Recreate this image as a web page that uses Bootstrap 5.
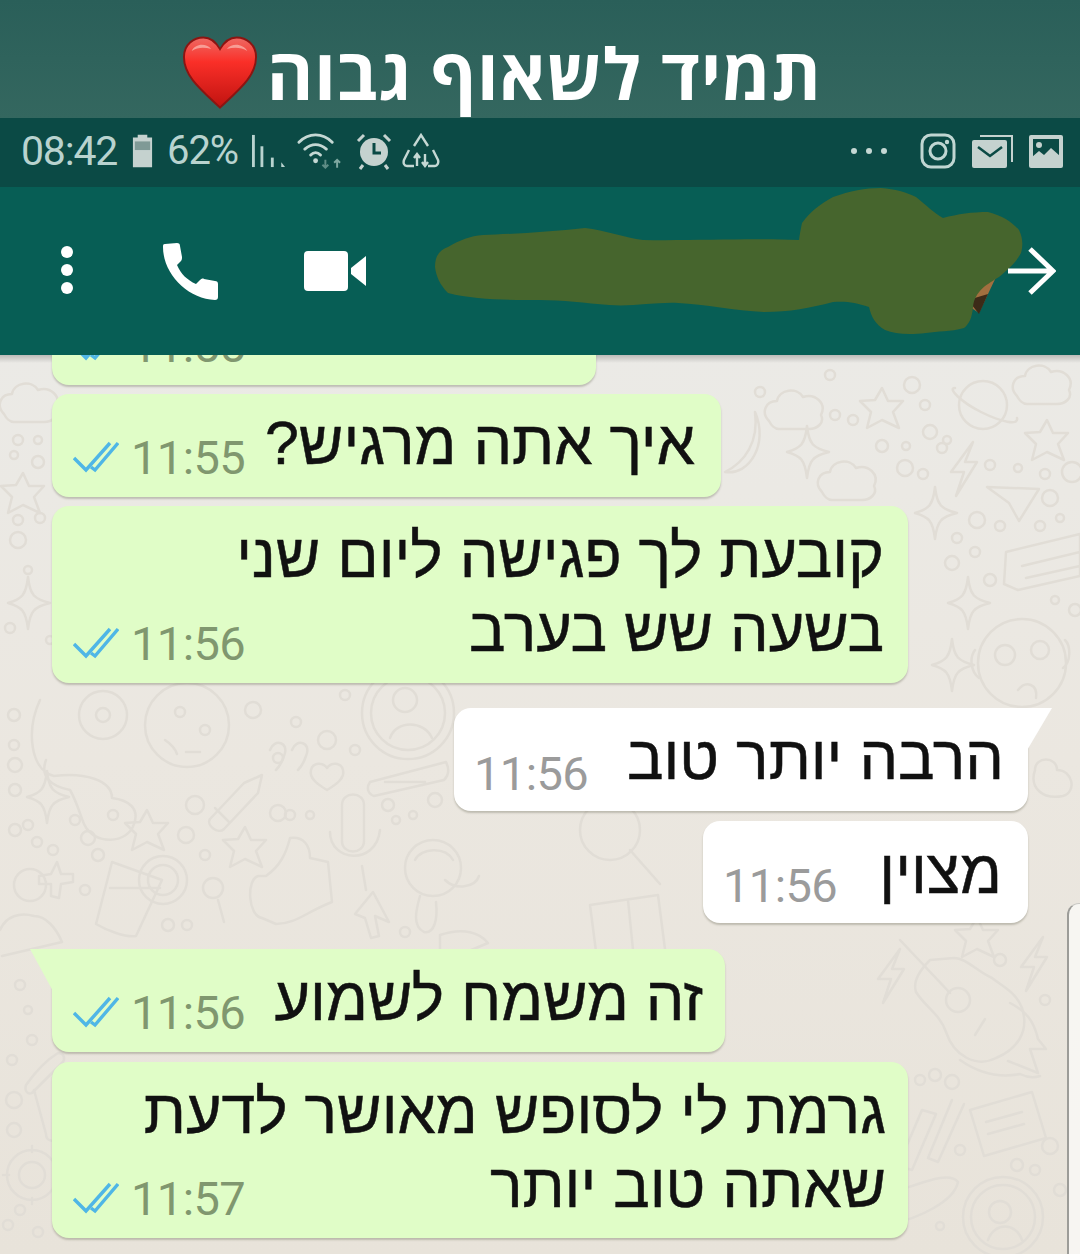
<!DOCTYPE html>
<html lang="he">
<head>
  <meta charset="UTF-8" />
  <meta name="viewport" content="width=device-width, initial-scale=1" />
  <title>תמיד לשאוף גבוה</title>
  <link href="https://cdn.jsdelivr.net/npm/bootstrap@5.3.0/dist/css/bootstrap.min.css" rel="stylesheet" />
  <style>
    html, body { height: 1254px; overflow: hidden; }
    body { background: #e9e5dd; font-family: "Liberation Sans", sans-serif; }
    .title-band {
      height: 118px;
      background: linear-gradient(#2a5f59, #34675f);
      color: #fff;
      font-family: "Open Sans", "Liberation Sans", sans-serif;
      font-weight: 700;
      font-size: 71px;
      letter-spacing: .7px;
      line-height: 1;
      padding-right: 258px;
      padding-top: 35px;
    }
    .title-text { margin-top: 2px; }
    .heart-icon { flex: none; margin-right: 9px; }
    .status-strip {
      height: 69px;
      background: #0b4a45;
      color: #b9d3cf;
      font-family: Roboto, sans-serif;
      padding: 0 17px 3px 21px;
    }
    .status-time { font-size: 41px; letter-spacing: -1.2px; line-height: 1; }
    .status-pct { font-size: 40px; letter-spacing: -1.2px; line-height: 1; margin-left: 13px; }
    .chat-head { height: 168px; background: #075e55; position: relative; padding-left: 54px; }
    .blot { position: absolute; left: 0; top: 0; }
    .back-arrow { position: absolute; left: 1006px; top: 59px; }
    .chat-area {
      height: 899px;
      position: relative;
      overflow: hidden;
      background: linear-gradient(#ebeae6, #ebe7e0 45%, #e8e3da);
    }
    .head-shadow { position: absolute; inset: 0 0 auto 0; height: 8px; background: linear-gradient(rgba(0,0,0,.2), rgba(0,0,0,0)); }
    .doodles { position: absolute; inset: 0; }
    .bubble {
      position: absolute;
      border-radius: 17px;
      box-shadow: 0 2px 2px rgba(90,90,70,.3);
      direction: rtl;
      color: #111;
      font-size: 61px;
      line-height: 74px;
      -webkit-text-stroke: .5px #111;
    }
    .bubble-out { background: #e0fdc7; left: 52px; }
    .bubble-in { background: #fff; right: 52px; }
    .msg-text { position: absolute; white-space: nowrap; }
    .msg-time {
      position: absolute;
      font-family: Roboto, sans-serif;
      font-size: 47px;
      line-height: 1;
      letter-spacing: -.6px;
      direction: ltr;
      -webkit-text-stroke: 0;
    }
    .bubble-out .msg-time { color: #80976f; left: 79px; bottom: 16px; }
    .bubble-in .msg-time { color: #9b9b9b; left: 20px; bottom: 14px; }
    .ticks { position: absolute; left: 21px; bottom: 24px; }
    .tail { position: absolute; top: 0; }
    .side-panel {
      position: absolute;
      left: 1067px;
      top: 548px;
      width: 30px;
      height: 400px;
      background: rgba(250,249,246,.82);
      border-left: 2px solid #9c9c98;
      border-top: 1px solid #c9c9c4;
      border-top-left-radius: 12px;
    }
  </style>
</head>
<body>

  <div class="title-band d-flex" dir="rtl">
    <span class="title-text">תמיד לשאוף גבוה</span>
    <svg class="heart-icon" width="76" height="75" viewBox="0 0 78 76">
      <defs>
        <linearGradient id="heartFill" x1="0" y1="0" x2="0" y2="1"><stop offset="0" stop-color="#ee6a64"/><stop offset=".35" stop-color="#fa2f28"/><stop offset="1" stop-color="#c01310"/></linearGradient>
      </defs>
      <path d="M39 74C20 56 2 42 2 22 2 9 12 2 22 2c8 0 13 5 17 12 4-7 9-12 17-12 10 0 20 7 20 20 0 20-18 34-37 52z" fill="url(#heartFill)" stroke="#8c1512" stroke-width="2"/>
      <path d="M10 16c3-7 14-9 20-2-7-2-14-2-20 2zM46 14c6-7 17-5 21 2-6-4-14-4-21-2z" fill="#f9b5ae" opacity=".75"/>
    </svg>
  </div>

  <div class="status-strip d-flex align-items-center justify-content-between">
    <div class="d-flex align-items-center">
      <span class="status-time">08:42</span>
      <svg width="23" height="36" viewBox="0 0 24 36" style="margin-left:14px"><path d="M7 1h10v3h5v31H2V4h5z" fill="#c5d2cf"/><rect x="4" y="8" width="16" height="9" fill="#7f9a96"/></svg>
      <span class="status-pct">62%</span>
      <svg width="34" height="36" viewBox="0 0 36 36" style="margin-left:14px"><g fill="#b9d3cf"><rect x="0" y="1" width="3" height="34"/><rect x="9" y="13" width="3" height="22"/><rect x="20" y="25" width="3" height="10"/><path d="M31 30l4 5h-4z"/></g></svg>
      <svg width="47" height="36" viewBox="0 0 48 36" style="margin-left:10px"><g fill="none" stroke="#c5d8d4" stroke-width="3" stroke-linecap="round"><path d="M3 9C13-1 27-1 37 9"/><path d="M9 16c7-6 15-6 22 0"/><path d="M15 22c3-3 7-3 10 0"/></g><circle cx="20" cy="28" r="2.5" fill="#c5d8d4"/><path d="M30 27v8M27 32l3 3 3-3" stroke="#5f8d86" stroke-width="2" fill="none"/><path d="M42 35v-8M39 30l3-3 3 3" stroke="#7fa8a1" stroke-width="2" fill="none"/></svg>
      <svg width="36" height="38" viewBox="0 0 36 38" style="margin-left:13px"><circle cx="18" cy="20" r="14" fill="#c5d2cf"/><path d="M18 11v10h7" stroke="#0b4a45" stroke-width="3" fill="none"/><path d="M2 9l6-6M34 9l-6-6M7 33l-3 4M29 33l3 4" stroke="#c5d2cf" stroke-width="3"/></svg>
      <svg width="38" height="36" viewBox="0 0 38 36" style="margin-left:10px"><g fill="none" stroke="#c5d8d4" stroke-width="2.4"><path d="M12 13l7-11 7 11"/><path d="M31 17l5 10c1 3-1 6-3 6h-7"/><path d="M12 33H5c-3 0-4-3-3-6l5-10"/><path d="M15 33v-12M12 25l3-4 3 4M23 33V21M20 29l3 4 3-4"/></g></svg>
    </div>
    <div class="d-flex align-items-center">
      <svg width="38" height="8" viewBox="0 0 38 8" style="margin-right:32px"><g fill="#c5d8d4"><circle cx="4" cy="4" r="3"/><circle cx="19" cy="4" r="3"/><circle cx="34" cy="4" r="3"/></g></svg>
      <svg width="36" height="36" viewBox="0 0 36 36" class="me-3"><g fill="none" stroke="#c0d6d2" stroke-width="3"><rect x="2" y="2" width="32" height="32" rx="9"/><circle cx="18" cy="18" r="8"/></g><circle cx="27" cy="9" r="2.2" fill="#c0d6d2"/></svg>
      <svg width="41" height="33" viewBox="0 0 41 33" class="me-3"><path d="M8 1h32v26" fill="none" stroke="#c5d2cf" stroke-width="2"/><rect x="0" y="5" width="35" height="28" rx="2" fill="#c5d2cf"/><path d="M6 12l12 9 12-9" fill="none" stroke="#0b4a45" stroke-width="2.5"/></svg>
      <svg width="34" height="33" viewBox="0 0 34 33"><rect width="34" height="33" rx="2" fill="#c5d2cf"/><rect x="4" y="4" width="26" height="18" fill="#0b4a45"/><circle cx="10" cy="10" r="3" fill="#c5d2cf"/><path d="M3 22l7-6 5 4 7-7 9 8v12H3z" fill="#c5d2cf"/></svg>
    </div>
  </div>

  <div class="chat-head d-flex align-items-center">
    <svg width="26" height="52" viewBox="0 0 26 52"><g fill="#fff"><circle cx="13" cy="7" r="6"/><circle cx="13" cy="25" r="6"/><circle cx="13" cy="43" r="6"/></g></svg>
    <svg width="58" height="58" viewBox="0 0 58 58" style="margin-left:82px"><path d="M3 2l12-1c2 0 3 1 3 3l2 11c0 1 0 3-1 4l-4 4c4 9 10 15 19 19l4-4c1-1 3-2 4-1l11 2c2 0 3 1 3 3v13c0 2-1 3-3 3C26 57 1 32 1 5c0-2 0-3 2-3z" fill="#fff"/></svg>
    <svg width="62" height="40" viewBox="0 0 62 40" style="margin-left:84px"><rect width="44" height="40" rx="4" fill="#fff"/><path d="M47 17L62 5v30L47 23z" fill="#fff"/></svg>
    <!-- scribble over the contact name, page coordinates -->
    <svg class="blot" width="1080" height="168" viewBox="0 187 1080 168">
      <path d="M962 283l35-8-18 38-12-8z" fill="#a26f3f"/>
      <path d="M968 300l20-6-9 20z" fill="#3c2a18"/>
      <path d="M435 267C435 255 440 250 448 247 460 240 470 236 483 235 510 234 550 232 585 228 605 230 625 238 643 240 690 241 750 238 799 240 800 232 801 228 802 223 810 212 820 204 833 197 850 191 865 188 881 188 895 189 906 192 916 197 926 205 934 213 943 218 958 214 972 212 988 212 1003 216 1012 222 1019 230 1023 238 1023 246 1021 253 1015 264 1007 270 999 277 988 284 975 290 973 307 972 318 969 324 964 328 950 332 938 331 926 333 908 335 895 334 885 330 875 324 871 316 869 307 855 302 845 301 833 302 810 308 790 312 764 312 735 311 705 304 678 303 655 302 632 307 609 305 585 303 562 300 540 300 510 300 475 300 448 293 440 285 436 276 435 267z" fill="#46652d"/>
    </svg>
    <svg class="back-arrow" width="50" height="50" viewBox="0 0 50 50"><path d="M2 25h44M24 3l23 22-23 22" fill="none" stroke="#fff" stroke-width="5"/></svg>
  </div>

  <div class="chat-area">
    <!-- wallpaper doodles, page coordinates -->
    <svg class="doodles" id="wallpaper" width="1080" height="899" viewBox="0 355 1080 899">
      <defs>
        <path id="d-cloud" d="M-26 14c-8-8-4-20 8-20 2-12 20-14 26-4 12-4 24 6 18 18 4 8-4 14-12 14h-30c-4 0-8-4-10-8z"/>
        <path id="d-star" d="M0-20l6 13 15 0-10 11 6 16-17-8-15 8 4-16-11-11 15-1z"/>
        <path id="d-spark" d="M0-26C2-8 6-4 22 0 6 4 2 8 0 26-2 8-6 4-20 0-6-4-2-8 0-26z"/>
        <path id="d-bolt" d="M10-26L-12 4 1 4-7 28 14-6 2-6z"/>
      </defs>
      <g fill="none" stroke="#e1ddd6" stroke-width="2.5" stroke-linejoin="round" stroke-linecap="round">
        <use href="#d-cloud" x="795" y="407"/><use href="#d-cloud" x="848" y="478"/><use href="#d-cloud" x="1043" y="382"/><use href="#d-cloud" x="30" y="400"/>
        <use href="#d-star" x="882" y="408"/><use href="#d-star" x="1047" y="440"/><use href="#d-star" x="23" y="493"/><use href="#d-star" x="147" y="830"/><use href="#d-star" x="245" y="847"/><use href="#d-star" x="977" y="937"/>
        <use href="#d-spark" x="807" y="452"/><use href="#d-spark" x="935" y="513"/><use href="#d-spark" x="968" y="603"/><use href="#d-spark" x="952" y="665"/><use href="#d-spark" x="28" y="603"/><use href="#d-spark" x="47" y="797"/>
        <use href="#d-bolt" x="963" y="468"/><use href="#d-bolt" x="1033" y="963"/><use href="#d-bolt" x="890" y="975"/>

        <!-- planet, banana, plane, ticket -->
        <circle cx="983" cy="405" r="24"/><path d="M955 388c-8 0 6 14 26 24s38 14 36 6"/>
        <path d="M755 412c4 30-10 50-30 60 24 4 44-28 30-60z"/>
        <path d="M987 487l52 2-20 32-10-18z"/>
        <path d="M1006 552l74-18v42l-62 14-14-6zM1022 566l58-14M1026 578l54-12"/>

        <!-- monkey -->
        <circle cx="1022" cy="663" r="44"/><circle cx="1005" cy="655" r="10"/><circle cx="1040" cy="650" r="9"/><path d="M1018 690c8-10 20-6 18 8"/><path d="M975 650c-6 8-4 22 4 28M1065 640c6 6 6 22-2 28"/>

        <!-- hand with cookie, cookie, quote -->
        <path d="M40 700c-14 30-10 70 14 76 30-4 58 4 58 22 16 2 28 10 22 26-6 20-40 22-50 0-4-10-8-24-14-34-20-4-30-14-24-30"/>
        <circle cx="103" cy="715" r="24"/><circle cx="103" cy="715" r="7"/>
        <circle cx="187" cy="725" r="42"/><circle cx="180" cy="712" r="5"/><circle cx="205" cy="730" r="5"/><path d="M165 740c6 4 10 8 12 14M186 752h14"/>
        <path d="M270 750c4-12 20-8 14 6-2 6-4 10-8 14M292 750c4-12 20-8 14 6-2 6-4 10-8 14"/>
        <path d="M327 790c-10-6-18-12-16-20 2-8 12-8 16-2 4-6 14-6 16 2 2 8-6 14-16 20z"/>
        <path d="M262 775l-4 18-34 36c-6 6-18-4-14-10l34-36z"/><path d="M215 808l14 14"/>

        <!-- avatar medallions -->
        <circle cx="408" cy="713" r="46"/><circle cx="408" cy="713" r="37"/><circle cx="405" cy="700" r="12"/><path d="M390 738c6-18 34-18 42 0"/>
        <path d="M370 782l76-20c4 8 2 14-2 18l-70 16c-6-2-8-8-4-14zM385 782h40"/>
        <circle cx="1003" cy="1217" r="40"/><circle cx="1003" cy="1217" r="32"/><circle cx="1000" cy="1212" r="11"/><path d="M988 1240c6-18 28-18 34 0"/>

        <!-- mic, face, arrow, thumb -->
        <path d="M342 805c0-14 22-14 22 0v36c0 14-22 14-22 0zM330 832c0 30 46 34 50-2M362 866l4 24"/>
        <circle cx="433" cy="868" r="28"/><path d="M415 860c6-12 30-14 38 0M420 896c-4 14-8 30 4 36 10 2 14-12 12-30"/><path d="M445 880c10 10 30 8 34-4"/>
        <path d="M373 892l-18 22 10 4 6 20 8-2-4-20 14 6z"/>
        <path d="M290 838c-4 16-10 28-24 38l-8 0c-12 4-10 40 4 42l14 6c20 0 30-12 56-22l-4-40-18-4c0-12-6-22-20-20z"/>

        <!-- person, plus, drink with orange, lollipop -->
        <circle cx="30" cy="885" r="16"/><path d="M0 930c6-14 20-18 34-14 12 0 22 12 28 26l-60 14"/>
        <path d="M57 862l4 12 12 0 0 8-12 2-2 14-8-2 0-12-12 0 0-8 12-2z"/>
        <path d="M112 862l50 18-26 56c-10 2-30-6-40-12zM110 888h50"/>
        <circle cx="163" cy="880" r="24"/><circle cx="163" cy="880" r="15"/>
        <circle cx="213" cy="888" r="10"/><path d="M218 900l6 22"/>

        <!-- right side: guitar and flames -->
        <path d="M900 940l50 53"/>
        <path d="M930 960c-8 8-18 20-14 32 10 16 24 22 30 40 8 24 30 36 50 26 20-8 34-26 26-50-6-16-20-22-30-30-14-6-26-20-38-20z"/>
        <circle cx="958" cy="1000" r="12"/><path d="M975 1035l10-16"/>
        <path d="M1010 1003c16 8 24 18 28 36l8 10-16 0 8 24-30-12M960 1060c20 14 40 18 60 14 8 4 14 4 20 2"/>
        <path d="M970 1110l62-18 14 46-62 18zM986 1122l36-10M988 1134l36-10"/>
        <path d="M922 1110l-24 56 14 4 24-56zM952 1100l-24 58 10 4 26-58"/>
        <path d="M900 1190c30-10 50-18 58-8-4 20-40 36-66 42"/>

        <!-- middle strip -->
        <path d="M590 905l68-10 8 62-68 10zM628 900l6 60"/>
        <circle cx="610" cy="830" r="30"/><path d="M630 850l30 34"/>
        <path d="M440 935c24-8 40-2 48 8l-48 20z"/>
        <path d="M1035 770c0-14 22-14 22 0 16 0 20 22 6 26-20 4-34-8-28-26z"/>
        <path d="M900 715c20-6 44 2 52 18-20 20-50 12-52-18z"/>

        <!-- left side: gear, paperclip -->
        <circle cx="32" cy="1175" r="13"/><circle cx="32" cy="1175" r="25"/><path d="M32 1146v6M32 1198v6M3 1175h6M55 1175h6"/>
        <path d="M26 1085c10-14 22-26 32-32 6 0 8 6 4 10l-30 30c-4 2-8-2-6-8z"/>
        <path d="M34 1090l12 44c0 8 8 8 14 4"/>
      </g>
      <g id="dots" fill="none" stroke="#e1ddd6" stroke-width="2.5"></g>
    </svg>
    <div class="head-shadow"></div>

    <div class="bubble bubble-out" style="top:-30px;width:544px;height:60px">
      <span class="msg-time">11:55</span>
      <svg class="ticks" width="46" height="32" viewBox="0 0 46 32"><g fill="none" stroke="#4fb6e6" stroke-width="3.4"><path d="M1 17l12 12L37 2"/><path d="M18 26l4 3L45 2"/></g></svg>
    </div>

    <div class="bubble bubble-out" style="top:39px;width:669px;height:103px">
      <span class="msg-text" style="right:26px;top:12px">איך אתה מרגיש?</span>
      <span class="msg-time">11:55</span>
      <svg class="ticks" width="46" height="32" viewBox="0 0 46 32"><g fill="none" stroke="#4fb6e6" stroke-width="3.4"><path d="M1 17l12 12L37 2"/><path d="M18 26l4 3L45 2"/></g></svg>
    </div>

    <div class="bubble bubble-out" style="top:151px;width:856px;height:177px">
      <span class="msg-text" style="right:24px;top:13px">קובעת לך פגישה ליום שני<br />בשעה שש בערב</span>
      <span class="msg-time">11:56</span>
      <svg class="ticks" width="46" height="32" viewBox="0 0 46 32"><g fill="none" stroke="#4fb6e6" stroke-width="3.4"><path d="M1 17l12 12L37 2"/><path d="M18 26l4 3L45 2"/></g></svg>
    </div>

    <div class="bubble bubble-in" style="top:353px;width:574px;height:103px;border-top-right-radius:0">
      <svg class="tail" style="left:572px" width="26" height="44" viewBox="0 0 26 44"><path d="M0 0h26L0 44z" fill="#fff"/></svg>
      <span class="msg-text" style="right:24px;top:13px">הרבה יותר טוב</span>
      <span class="msg-time">11:56</span>
    </div>

    <div class="bubble bubble-in" style="top:466px;width:325px;height:102px">
      <span class="msg-text" style="right:26px;top:14px">מצוין</span>
      <span class="msg-time">11:56</span>
    </div>

    <div class="side-panel"></div>

    <div class="bubble bubble-out" style="top:594px;width:673px;height:103px;border-top-left-radius:0">
      <svg class="tail" style="left:-22px" width="24" height="44" viewBox="0 0 24 44"><path d="M24 0H0l24 44z" fill="#e0fdc7"/></svg>
      <span class="msg-text" style="right:22px;top:13px">זה משמח לשמוע</span>
      <span class="msg-time">11:56</span>
      <svg class="ticks" width="46" height="32" viewBox="0 0 46 32"><g fill="none" stroke="#4fb6e6" stroke-width="3.4"><path d="M1 17l12 12L37 2"/><path d="M18 26l4 3L45 2"/></g></svg>
    </div>

    <div class="bubble bubble-out" style="top:707px;width:856px;height:176px">
      <span class="msg-text" style="right:22px;top:13px">גרמת לי לסופש מאושר לדעת<br />שאתה טוב יותר</span>
      <span class="msg-time">11:57</span>
      <svg class="ticks" width="46" height="32" viewBox="0 0 46 32"><g fill="none" stroke="#4fb6e6" stroke-width="3.4"><path d="M1 17l12 12L37 2"/><path d="M18 26l4 3L45 2"/></g></svg>
    </div>
  </div>

  <script>
    // little circles scattered over the wallpaper: x, y, r
    const wallpaperDots = [
      [14,715,6],[14,745,5],[15,765,7],[15,790,6],[15,830,6],[28,825,5],[53,850,5],[37,842,5],[75,820,5],[88,838,7],[98,855,6],[113,815,5],
      [186,835,8],[195,805,9],[205,855,5],[253,710,8],[296,722,5],[345,695,5],[327,740,9],[278,758,5],[355,750,5],[290,815,5],[278,813,8],[310,815,4],
      [388,805,6],[413,815,4],[435,800,7],[396,820,4],[168,925,6],[187,925,5],[85,890,5],[405,932,5],
      [760,392,5],[830,375,5],[835,415,5],[853,420,5],[912,385,8],[925,405,5],[930,432,7],[882,446,6],[906,446,4],[942,448,5],[947,440,4],
      [905,468,8],[923,474,5],[990,465,5],[1018,468,4],[1045,474,5],[1072,472,10],[1050,498,8],[1060,518,4],[977,520,8],[1000,526,5],[1040,526,5],
      [957,538,5],[975,552,5],[952,563,7],[990,580,6],[1055,600,4],[1075,610,6],
      [18,440,5],[38,440,4],[14,455,4],[38,462,6],[18,520,5],[40,518,5],[18,540,8],[28,570,4],[10,628,5],[50,640,4],
      [1000,960,6],[1045,1000,5],[935,1075,6],[920,1080,5],[952,1082,7],[960,1150,5],[1050,1146,8],[1017,1165,6],[1035,1170,5],[1060,1190,6],[940,1226,4],
      [20,985,5],[28,1010,4],[32,1040,5],[12,1060,5],[14,1100,8],[14,1130,7],[20,1210,5],[8,1225,5],[38,1232,5]
    ];
    const dotsGroup = document.getElementById('dots');
    wallpaperDots.forEach(d => {
      const c = document.createElementNS('http://www.w3.org/2000/svg', 'circle');
      c.setAttribute('cx', d[0]);
      c.setAttribute('cy', d[1]);
      c.setAttribute('r', d[2]);
      dotsGroup.appendChild(c);
    });
  </script>
  <script src="https://cdn.jsdelivr.net/npm/bootstrap@5.3.0/dist/js/bootstrap.bundle.min.js"></script>
</body>
</html>
